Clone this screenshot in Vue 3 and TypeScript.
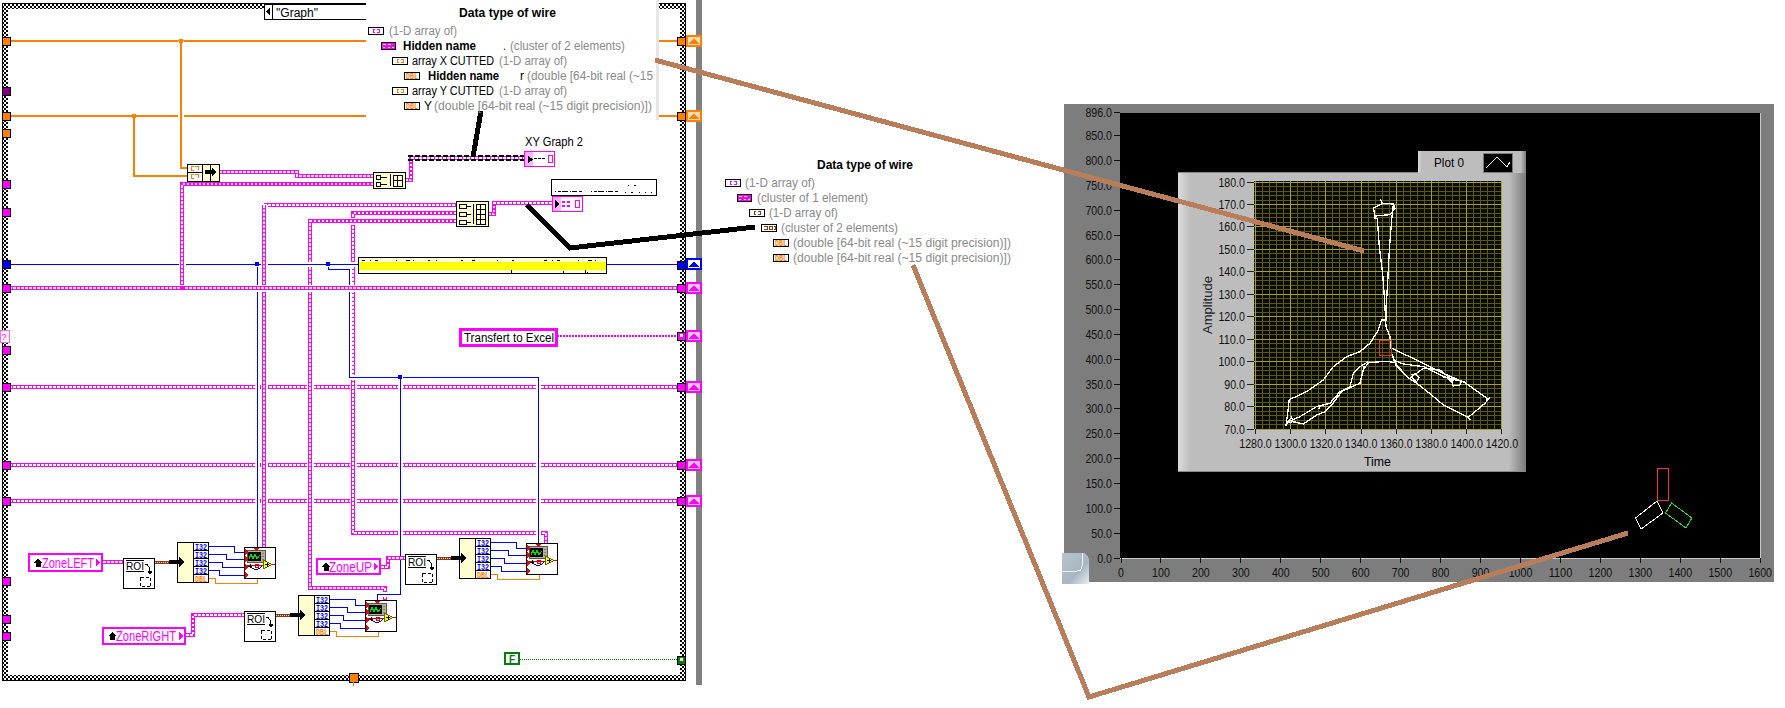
<script setup lang="ts">
type Wire = { d: string; kind: 'pink' | 'blue' | 'orange'; halo?: boolean }
type Label = { x: number; y: number; t: string; w: number; c?: string }

const wires: Wire[] = [
  { d: 'M9 41H366M659 41H678', kind: 'orange' },
  { d: 'M9 116H366M659 116H678', kind: 'orange' },
  { d: 'M181 41V168H188', kind: 'orange', halo: true },
  { d: 'M134 116V176H188', kind: 'orange' },
  { d: 'M9 387H678', kind: 'pink' },
  { d: 'M9 465H678', kind: 'pink' },
  { d: 'M9 501H678', kind: 'pink' },
  { d: 'M264 205H457', kind: 'pink' },
  { d: 'M456 213H353V533H546V545', kind: 'pink', halo: true },
  { d: 'M456 221H310V588H385V600', kind: 'pink', halo: true },
  { d: 'M219 172H297V176H373', kind: 'pink' },
  { d: 'M405 180H411V158H524', kind: 'pink' },
  { d: 'M488 214H494V203H552', kind: 'pink' },
  { d: 'M257 264V547', kind: 'blue', halo: true },
  { d: 'M328 264V269H349V377H538V543', kind: 'blue', halo: true },
  { d: 'M400 377V594H377V600', kind: 'blue', halo: true },
  { d: 'M9 264H358M607 264H678', kind: 'blue', halo: true },
  { d: 'M373 184H182V288', kind: 'pink', halo: true },
  { d: 'M264 205V547', kind: 'pink', halo: true },
  { d: 'M9 288H678', kind: 'pink', halo: true },
  { d: 'M103 562H123', kind: 'pink' },
  { d: 'M186 635H193V615H244', kind: 'pink' },
  { d: 'M381 567H388V558H405', kind: 'pink' },
]

const dots = [
  { x: 181, y: 41, c: '#ff8000' },
  { x: 134, y: 116, c: '#ff8000' },
  { x: 257, y: 264, c: '#0000ff' },
  { x: 328, y: 264, c: '#0000ff' },
  { x: 400, y: 377, c: '#0000ff' },
  { x: 182, y: 288, c: '#ff00ff' },
]

const leftTerms = [
  { y: 41, c: '#ff8000' }, { y: 91, c: '#800080' }, { y: 116, c: '#ff8000' }, { y: 133, c: '#ff8000' },
  { y: 184, c: '#ff00ff' }, { y: 212, c: '#ff00ff' }, { y: 264, c: '#0000ff' }, { y: 288, c: '#ff00ff' },
  { y: 350, c: '#ff00ff' }, { y: 387, c: '#ff00ff' }, { y: 465, c: '#ff00ff' }, { y: 501, c: '#ff00ff' },
  { y: 581, c: '#ff00ff' }, { y: 619, c: '#ff00ff' }, { y: 636, c: '#ff00ff' },
]
const rightTerms = [
  { y: 41, c: '#ff8000' }, { y: 116, c: '#ff8000' }, { y: 265, c: '#0000ff' }, { y: 288, c: '#ff00ff' },
  { y: 336, c: '#ff00ff' }, { y: 387, c: '#ff00ff' }, { y: 465, c: '#ff00ff' }, { y: 501, c: '#ff00ff' },
  { y: 660, c: '#0a7a0a' },
]
const arrows = [
  { y: 41, c: '#ff8000', bg: '#ffd9b0' }, { y: 116, c: '#ff8000', bg: '#ffd9b0' },
  { y: 264, c: '#0000ff', bg: '#ffffff' }, { y: 288, c: '#ff00ff', bg: '#ffc0ff' },
  { y: 336, c: '#ff00ff', bg: '#ffc0ff' }, { y: 387, c: '#ff00ff', bg: '#ffc0ff' },
  { y: 465, c: '#ff00ff', bg: '#ffc0ff' }, { y: 501, c: '#ff00ff', bg: '#ffc0ff' },
]

const groups = [
  { x: 123, y: 558 },
  { x: 244, y: 611 },
  { x: 405, y: 554 },
]
const rowLabels = ['I32', 'I32', 'I32', 'I32', 'DBL']
const blueStairs = [
  'M86 -12H111V-6H121', 'M86 -4H103V1H121', 'M86 4H99V9H121', 'M86 12H96V17H121',
]
const leftPins = [-6, 1, 9, 17]

const constants = [
  { x: 28, y: 553, w: 75, h: 19, t: 'ZoneLEFT', tx: 42, tw: 52 },
  { x: 102, y: 627, w: 84, h: 18, t: 'ZoneRIGHT', tx: 116, tw: 60 },
  { x: 316, y: 558, w: 65, h: 17, t: 'ZoneUP', tx: 329, tw: 43 },
]

const tip: Label[] = [
  { x: 459, y: 17, t: 'Data type of wire', w: 97, c: 'bold' },
  { x: 389, y: 35, t: '(1-D array of)', w: 68, c: 'gray' },
  { x: 403, y: 50, t: 'Hidden name', w: 73, c: 'bold' },
  { x: 503, y: 50, t: '.', w: 3, c: 'ink' },
  { x: 510, y: 50, t: '(cluster of 2 elements)', w: 115, c: 'gray' },
  { x: 412, y: 65, t: 'array X CUTTED', w: 82, c: 'ink' },
  { x: 499, y: 65, t: '(1-D array of)', w: 68, c: 'gray' },
  { x: 428, y: 80, t: 'Hidden name', w: 71, c: 'bold' },
  { x: 520, y: 80, t: 'r', w: 4, c: 'ink' },
  { x: 527, y: 80, t: '(double [64-bit real (~15', w: 126, c: 'gray' },
  { x: 412, y: 95, t: 'array Y CUTTED', w: 82, c: 'ink' },
  { x: 499, y: 95, t: '(1-D array of)', w: 68, c: 'gray' },
  { x: 424, y: 110, t: 'Y', w: 8, c: 'ink' },
  { x: 434, y: 110, t: '(double [64-bit real (~15 digit precision)])', w: 218, c: 'gray' },
  { x: 817, y: 169, t: 'Data type of wire', w: 96, c: 'bold' },
  { x: 745, y: 187, t: '(1-D array of)', w: 70, c: 'gray' },
  { x: 757, y: 202, t: '(cluster of 1 element)', w: 111, c: 'gray' },
  { x: 769, y: 217, t: '(1-D array of)', w: 69, c: 'gray' },
  { x: 781, y: 232, t: '(cluster of 2 elements)', w: 117, c: 'gray' },
  { x: 793, y: 247, t: '(double [64-bit real (~15 digit precision)])', w: 218, c: 'gray' },
  { x: 793, y: 262, t: '(double [64-bit real (~15 digit precision)])', w: 218, c: 'gray' },
  { x: 525, y: 146, t: 'XY Graph 2', w: 58, c: 'ink' },
  { x: 464, y: 342, t: 'Transfert to Excel', w: 90, c: 'ink' },
  { x: 276, y: 17, t: '"Graph"', w: 42, c: 'ink' },
  { x: 1434, y: 167, t: 'Plot 0', w: 30, c: 'ink' },
  { x: 1364, y: 466, t: 'Time', w: 27, c: 'ink' },
]

const icons = [
  { x: 368, y: 27, k: 'arr', c: '#ff00ff' },
  { x: 381, y: 42, k: 'clu', c: '#ff00ff' },
  { x: 392, y: 57, k: 'arr', c: '#ff8000' },
  { x: 404, y: 72, k: 'dbl', c: '#ff8000' },
  { x: 392, y: 87, k: 'arr', c: '#ff8000' },
  { x: 404, y: 102, k: 'dbl', c: '#ff8000' },
  { x: 725, y: 179, k: 'arr', c: '#ff00ff' },
  { x: 737, y: 194, k: 'clu', c: '#ff00ff' },
  { x: 749, y: 209, k: 'arr', c: '#8b3a0f' },
  { x: 761, y: 224, k: 'cb', c: '#8b3a0f' },
  { x: 773, y: 239, k: 'dbl', c: '#ff8000' },
  { x: 773, y: 254, k: 'dbl', c: '#ff8000' },
]

const numW = (t: string) => t.replace('.', '').length * 5.9 + (t.includes('.') ? 3 : 0)

const outerY = [896, 850, 800, 750, 700, 650, 600, 550, 500, 450, 400, 350, 300, 250, 200, 150, 100, 50, 0]
  .map(v => ({ y: 558 - v * 0.4967, t: v.toFixed(1) }))
const outerX = Array.from({ length: 17 }, (_, i) => ({ x: 1121 + i * 39.95, t: String(i * 100) }))

const innerY = Array.from({ length: 12 }, (_, i) => ({ y: 429 - i * 22.45, t: (70 + i * 10).toFixed(1) }))
const innerX = Array.from({ length: 8 }, (_, i) => ({ x: 1255.5 + i * 35.2, t: (1280 + i * 20).toFixed(1) }))
const minorY = Array.from({ length: 56 }, (_, i) => 429 - i * 4.49)
const minorX = Array.from({ length: 36 }, (_, i) => 1255.5 + i * 7.04)

const curves = [
  '660,178 668,190 700,192 705,205 690,224 645,228 640,205 650,200 668,190',
  '643,210 645,235 652,235 658,320 668,400 675,500 678,560 690,590 695,640 710,680 740,710 770,730 815,765 850,795 925,832 932,840',
  '700,195 695,240 688,330 684,410 680,480 678,540 665,540 655,570 630,610 600,635 560,650 520,680 490,720 440,755 410,770 388,778 383,820 378,858',
  '378,850 400,845 430,852 470,825 495,815 515,795 545,755 580,738 600,730 610,690 625,668 680,664 705,668 740,710',
  '385,845 420,830 470,800 510,790 540,755 570,740 580,700 600,680 625,665',
  '695,625 770,660 850,700 915,728 985,778 975,790 925,832',
  '700,660 730,672 790,680 850,710 895,722 915,725',
  '755,705 770,700 790,685 840,690 870,715 880,738 900,735 905,722',
  '985,778 990,772',
  '975,790 983,780 978,775',
  '752,715 765,702 778,712 770,725 755,712',
  '845,710 860,712 875,725 885,715 870,722',
  '604,675 612,680 610,690',
  '470,800 482,798 475,808',
  '378,850 395,832 400,848',
]
</script>

<template>
  <div class="page">
    <svg class="canvas" width="1785" height="708" viewBox="0 0 1785 708">
      <defs>
        <pattern id="hatch" width="4" height="4" patternUnits="userSpaceOnUse">
          <rect width="4" height="4" fill="#fff" />
          <rect width="2" height="2" fill="#000" />
          <rect x="2" y="2" width="2" height="2" fill="#000" />
        </pattern>
        <linearGradient id="panel" x1="0" x2="1" y1="0" y2="0">
          <stop offset="0" stop-color="#dcdcdc" />
          <stop offset="0.035" stop-color="#bdbdbd" />
          <stop offset="0.95" stop-color="#bdbdbd" />
          <stop offset="1" stop-color="#7c7c7c" />
        </linearGradient>
        <linearGradient id="btn" x1="0" x2="1" y1="0" y2="1">
          <stop offset="0" stop-color="#b8c4d0" />
          <stop offset="0.6" stop-color="#a7b5c4" />
          <stop offset="1" stop-color="#e8eef4" />
        </linearGradient>
      </defs>

      <!-- block diagram -->
      <g class="crisp">
        <rect x="696" y="0" width="6" height="685" fill="#808080" />
        <path d="M2 3H686V681H2ZM8 9V675H680V9Z" fill="url(#hatch)" fill-rule="evenodd" />
        <rect x="2.5" y="3.5" width="683" height="677" fill="none" stroke="#000" />

        <template v-for="(w, i) in wires" :key="i">
          <path v-if="w.halo" :d="w.d" :class="'halo-' + w.kind" />
          <path :d="w.d" :class="'w-' + w.kind" />
          <path v-if="w.kind === 'pink'" :d="w.d" class="w-dash" />
        </template>

        <path d="M408 156H524M408 160H524" class="w-black" />
        <path d="M557 336H678" class="w-thin" />
        <path d="M520 659H678" class="w-green" />

        <g v-for="d in dots" :key="d.x + '-' + d.y">
          <rect :x="d.x - 2" :y="d.y - 2" width="4" height="4" :fill="d.c" />
        </g>

        <!-- frame terminals -->
        <rect v-for="t in leftTerms" :key="'l' + t.y" x="2" :y="t.y - 4" width="8" height="8" :fill="t.c" stroke="#000" />
        <rect x="0" y="330" width="9" height="12" fill="#fff8ff" stroke="#ff66ff" />
        <rect v-for="t in rightTerms" :key="'r' + t.y" x="677" :y="t.y - 4" width="8" height="8" :fill="t.c" stroke="#000" />
        <rect x="680" y="334" width="3" height="3" fill="#fff" />
        <rect x="680" y="658" width="3" height="3" fill="#fff" />
        <g v-for="a in arrows" :key="'a' + a.y">
          <rect x="687" :y="a.y - 5" width="14" height="10" :fill="a.bg" :stroke="a.c" stroke-width="2" />
          <path :d="`M689 ${a.y + 3}L694 ${a.y - 3}L699 ${a.y + 3}Z`" :fill="a.c" />
        </g>
        <rect x="349" y="673" width="9" height="9" fill="#ff8000" stroke="#000" />
        <path d="M353 682V686" stroke="#ff8000" />

        <!-- case selector -->
        <rect x="264" y="4" width="120" height="15" fill="#fff" stroke="#000" />
        <path d="M264 4H272V19H264Z" fill="#fff" stroke="#000" />
        <path d="M270 8V15L266 11.5Z" fill="#000" />

        <!-- bundle -->
        <rect x="187" y="164" width="32" height="17" fill="#ffffd0" stroke="#000" />
        <rect x="187" y="164" width="15" height="17" fill="#fff" stroke="#000" />
        <path d="M187 172H202M210 164V181" stroke="#000" fill="none" />
        <path d="M191 168V166H194M198 166H195M191 168V170H194M198 170V166M191 176V174H194M198 174H195M191 176V178H194M198 178V174" stroke="#ff8000" fill="none" />
        <path d="M205 170H212V168L217 172L212 176V174H205Z" fill="#000" />

        <!-- build array small -->
        <rect x="373" y="172" width="32" height="16" fill="#ffffd0" stroke="#000" />
        <rect x="376" y="175" width="4" height="4" fill="#fff" stroke="#000" />
        <rect x="376" y="182" width="4" height="4" fill="#fff" stroke="#000" />
        <path d="M381 177H387M381 184H387M390 174V186M393 175H402V186H393ZM393 180H402M397 175V186" stroke="#000" fill="none" />

        <!-- build array large -->
        <rect x="456" y="201" width="32" height="25" fill="#ffffd0" stroke="#000" />
        <path d="M459 204H466V208H459ZM459 212H466V216H459ZM459 220H466V224H459ZM467 206H471M467 214H471M467 222H471M473 204V224M476 204H485V224H476ZM476 209H485M476 214H485M476 219H485M480 204V224" stroke="#000" fill="none" />

        <!-- indicators -->
        <rect x="524.5" y="151.5" width="30" height="15" fill="#fff" stroke="#ff00ff" />
        <rect x="525" y="152" width="8" height="14" fill="#ffb0ff" />
        <path d="M528 156V163L533 159.5Z" fill="#000" />
        <path d="M534 158H546" stroke="#000" stroke-dasharray="3 1" />
        <rect x="548" y="155" width="4" height="7" fill="none" stroke="#ff00ff" />
        <rect x="552.5" y="196.5" width="30" height="15" fill="#fff" stroke="#ff00ff" />
        <rect x="553" y="197" width="8" height="14" fill="#ffb0ff" />
        <path d="M555 200V208L560 204Z" fill="#000" />
        <path d="M562 202H572M562 206H572" stroke="#ff00ff" stroke-width="2" stroke-dasharray="3 2" />
        <rect x="575" y="200" width="4" height="7" fill="none" stroke="#ff00ff" />
        <rect x="551.5" y="179.5" width="105" height="16" fill="#fff" stroke="#000" />
        <path d="M555 191H620" stroke="#000" stroke-dasharray="1 2 3 1 6 2 1 1 5 2 3 9" />
        <path d="M625 192H652M628 185H640" stroke="#000" stroke-dasharray="1 5 2 6 1 5" />

        <!-- comment -->
        <rect x="358.5" y="257.5" width="248" height="16" fill="#ffffd8" stroke="#000" />
        <rect x="359" y="262" width="247" height="8" fill="#ffff00" />
        <path d="M362 260.5H604" stroke="#000" stroke-dasharray="3 5 1 4 3 18 1 9 4 3 1 14 2 6 1 24 2 9 3 22 1 14 2 30" />
        <path d="M511 270V273M563 271V273M585 270V273M587 272V273" stroke="#000" />

        <!-- transfer constant -->
        <rect x="460" y="329" width="96" height="16" fill="#fff" stroke="#ff00ff" stroke-width="3" />

        <!-- boolean constant -->
        <rect x="505" y="653" width="14" height="11" fill="#fff" stroke="#0a7a0a" stroke-width="2" />

        <!-- path constants -->
        <g v-for="k in constants" :key="k.t">
          <rect :x="k.x + 1" :y="k.y + 1" :width="k.w - 2" :height="k.h - 2" fill="#fff" stroke="#ff00ff" stroke-width="2" />
          <path :d="`M${k.x + 6} ${k.y + k.h / 2}l4 -4l4 4h-1.500v4h-5v-4z`" fill="#000" />
          <path :d="`M${k.x + k.w - 7} ${k.y + k.h / 2 - 4}v8l4 -4z`" fill="#ff00ff" />
        </g>

        <!-- ROI → unbundle → VI -->
        <g v-for="g in groups" :key="g.x" :transform="`translate(${g.x} ${g.y})`">
          <rect x="0.500" y="0.500" width="31" height="30" fill="#fff" stroke="#000" />
          <path d="M3 2H21M3 13H21" stroke="#000" />
          <path d="M22 6Q27 7 27 14" stroke="#000" fill="none" />
          <path d="M24.500 13H29.500L27 17Z" fill="#000" />
          <rect x="17.500" y="19.500" width="10" height="9" fill="none" stroke="#000" stroke-dasharray="3 2" />

          <path d="M32 4H50" class="w-brown" />
          <path d="M32 4H50" class="w-brown-dash" />

          <rect x="54.500" y="-15.500" width="31" height="40" fill="#ffffd0" stroke="#000" />
          <path d="M46 2H56V-1L62 4L56 9V6H46Z" fill="#000" />
          <g v-for="(r, i) in rowLabels" :key="i">
            <rect x="70.500" :y="-15.500 + i * 8" width="15" height="8" fill="#fff" stroke="#000" />
          </g>

          <path v-for="(d, i) in blueStairs" :key="i" :d="d" class="w-sub-blue" />
          <path d="M86 20H92V25H134V21" class="w-sub-orange" />

          <rect x="121.500" y="-10.500" width="31" height="31" fill="#fff" stroke="#000" />
          <rect x="124.500" y="-7.500" width="18" height="12" fill="#b7b191" stroke="#555" />
          <rect x="125" y="-6" width="13" height="9" fill="#000" />
          <path d="M126 1L128 -4L130 1L132 -4L134 1L137 -3" stroke="#00e000" fill="none" />
          <path d="M139 -5H141M139 -2H141M139 1H141" stroke="#777" />
          <path d="M124 7H148" stroke="#d00000" />
          <path d="M127 8Q133 15 139 8" stroke="#0000c0" fill="none" />
          <path d="M125 8H129M127 6V10" stroke="#000" />
          <circle cx="134" cy="8" r="2" fill="none" stroke="#e00000" />
          <path d="M140 2L149 6.500L140 11Z" fill="#ffff00" stroke="#606000" />
          <path d="M142 6.500H146M144 4.500V8.500" stroke="#000" />
          <path d="M149 6.500H152" stroke="#e00000" />
          <path d="M131 -10H136L133.500 -7Z" fill="#f00000" />
          <path v-for="p in leftPins" :key="p" :d="`M122 ${p - 3}L125 ${p}L122 ${p + 3}Z`" fill="#f00000" />
        </g>
      </g>

      <!-- row labels inside the sub-VI nodes -->
      <g v-for="g in groups" :key="'t' + g.x" :transform="`translate(${g.x} ${g.y})`">
        <text class="roi" x="3" y="11.500" textLength="18" lengthAdjust="spacingAndGlyphs">ROI</text>
        <text
          v-for="(r, i) in rowLabels"
          :key="i"
          x="78"
          :y="-8.500 + i * 8"
          class="tiny"
          :class="r === 'DBL' ? 'orange' : 'blue'"
          textLength="12"
          lengthAdjust="spacingAndGlyphs"
          text-anchor="middle"
        >{{ r }}</text>
      </g>

      <text x="512" y="663" class="const-f">F</text>
      <text v-for="k in constants" :key="'c' + k.t" :x="k.tx" :y="k.y + k.h / 2 + 5" class="pink-text" :textLength="k.tw" lengthAdjust="spacingAndGlyphs">{{ k.t }}</text>
      <text x="1.500" y="340" class="question">?</text>

      <!-- front panel -->
      <g class="crisp">
        <rect x="1064" y="104" width="710" height="478" fill="#7d7d7d" />
        <rect x="1120" y="113" width="640" height="445" fill="#000" />
        <path d="M1120 558.500H1760.500V113" stroke="#c8c8c8" fill="none" />
        <path v-for="l in outerY" :key="l.t" :d="`M1114 ${l.y}H1120`" stroke="#111" />
        <path v-for="l in outerX" :key="l.t" :d="`M${l.x} 558V563`" stroke="#111" />

        <rect x="1178" y="172" width="348" height="300" fill="url(#panel)" />
        <path d="M1178 172.500H1418M1178 471.500H1526" stroke="#888" />
        <rect x="1418" y="151" width="108" height="22" fill="url(#panel)" />
        <rect x="1483" y="153" width="29" height="19" fill="#000" stroke="#7c7c7c" />
        <path d="M1486 168L1497 157L1507 167L1510 162" stroke="#fff" fill="none" />

        <rect x="1254" y="181" width="248" height="248" fill="#0a0a00" />
        <path v-for="y in minorY" :key="'my' + y" :d="`M1254 ${y}H1502`" stroke="#5a5a08" />
        <path v-for="x in minorX" :key="'mx' + x" :d="`M${x} 181V429`" stroke="#5a5a08" />
        <path v-for="l in innerY" :key="'ly' + l.t" :d="`M1254 ${l.y}H1502`" stroke="#a8a800" />
        <path v-for="l in innerX" :key="'lx' + l.t" :d="`M${l.x} 181V429`" stroke="#a8a800" />
        <path v-for="l in innerY" :key="'ty' + l.t" :d="`M1247 ${l.y}H1254`" stroke="#222" />
        <path v-for="l in innerX" :key="'tx' + l.t" :d="`M${l.x} 429V434`" stroke="#222" />

        <g transform="translate(1160 140) scale(0.3333)">
          <polyline v-for="(c, i) in curves" :key="i" :points="c" class="trace" />
          <rect x="658" y="601" width="37" height="46" class="red-box" />
        </g>

        <rect x="1657.500" y="468.500" width="11" height="32" fill="none" stroke="#ff3030" />
        <polygon points="1657,501 1663,513 1641,529 1635.500,518" fill="none" stroke="#fff" />
        <polygon points="1671.500,503 1692,518 1686,528 1665.500,513" fill="none" stroke="#20e020" />

        <path d="M1062 553H1081Q1089 553 1089 561V584H1062Z" fill="url(#btn)" />
        <path d="M1062 571H1077Q1082 571 1082 566V553" stroke="#eef2f6" fill="none" />
      </g>

      <text v-for="l in outerY" :key="'oy' + l.t" x="1112" :y="l.y + 4.500" class="num" text-anchor="end" :textLength="numW(l.t)" lengthAdjust="spacingAndGlyphs">{{ l.t }}</text>
      <text v-for="l in outerX" :key="'ox' + l.t" :x="l.x" y="577" class="num" text-anchor="middle" :textLength="numW(l.t)" lengthAdjust="spacingAndGlyphs">{{ l.t }}</text>
      <text v-for="l in innerY" :key="'iy' + l.t" x="1245" :y="l.y + 4.500" class="num" text-anchor="end" :textLength="numW(l.t)" lengthAdjust="spacingAndGlyphs">{{ l.t }}</text>
      <text v-for="l in innerX" :key="'ix' + l.t" :x="l.x" y="448" class="num" text-anchor="middle" :textLength="numW(l.t)" lengthAdjust="spacingAndGlyphs">{{ l.t }}</text>
      <text class="axis-y" transform="translate(1212 305) rotate(-90)" text-anchor="middle">Amplitude</text>

      <!-- wire-type tooltip panel -->
      <g class="crisp">
        <rect x="366" y="0" width="290" height="120" fill="#fff" />
        <rect x="656" y="0" width="3" height="120" fill="#e6e6e6" />
      </g>

      <!-- annotation strokes drawn by hand over the screenshot -->
      <g class="crisp">
        <path d="M655 60L1364 251" class="tan" />
        <path d="M913 265L1089 697L1628 533" class="tan" />
        <path d="M481 111L473 157" class="ann" />
        <path d="M527 205L570 248L755 227" class="ann" />
      </g>

      <g v-for="(ic, i) in icons" :key="i" :transform="`translate(${ic.x} ${ic.y})`">
        <g class="crisp">
          <rect
            x="0.500"
            y="0.500"
            :width="ic.k === 'clu' ? 14 : 15"
            height="7"
            :fill="ic.k === 'clu' ? ic.c : '#fff'"
            stroke="#000"
          />
          <path v-if="ic.k === 'arr'" :d="'M7 2.500H5V5.500H7M9 2.500H11V5.500H9'" :stroke="ic.c" fill="none" />
          <path v-if="ic.k === 'clu'" d="M2 2H5V3H2ZM7 2H10V3H7ZM2 5H4V6H2ZM7 5H9V6H7ZM11 5H13V6H11Z" fill="#fff" />
          <path v-if="ic.k === 'cb'" d="M2.500 2.500H6V5.500H2.500M8 2.500H11V5.500H8ZM12.500 2.500H14V5.500H12.500" :stroke="ic.c" fill="none" />
        </g>
        <text v-if="ic.k === 'dbl'" x="8" y="7" class="tiny orange" text-anchor="middle" textLength="12" lengthAdjust="spacingAndGlyphs">DBL</text>
      </g>
      <text
        v-for="(l, i) in tip"
        :key="i"
        :x="l.x"
        :y="l.y"
        :class="l.c"
        class="lbl"
        :textLength="l.w"
        lengthAdjust="spacingAndGlyphs"
      >{{ l.t }}</text>
    </svg>
  </div>
</template>

<style>
html, body { margin: 0; background: #fff; }
</style>

<style scoped>
.page {
  width: 1785px;
  height: 708px;
  overflow: hidden;
  background: #fff;
}
.canvas { display: block; }
.crisp { shape-rendering: crispEdges; }

.w-pink { fill: none; stroke: #ff00ff; stroke-width: 4; }
.w-dash { fill: none; stroke: #fff; stroke-width: 1.2; stroke-dasharray: 2.5 1.5; }
.w-blue { fill: none; stroke: #0000ff; stroke-width: 1; }
.w-orange { fill: none; stroke: #ff8000; stroke-width: 2; }
.halo-pink { fill: none; stroke: #fff; stroke-width: 7; }
.halo-blue { fill: none; stroke: #fff; stroke-width: 5; }
.halo-orange { fill: none; stroke: #fff; stroke-width: 6; }
.w-black { fill: none; stroke: #000; stroke-width: 1.5; stroke-dasharray: 5 2; }
.w-thin { fill: none; stroke: #ff00ff; stroke-width: 2; stroke-dasharray: 2 1; }
.w-green { fill: none; stroke: #0a7a0a; stroke-width: 1; stroke-dasharray: 1 1; }
.w-brown { fill: none; stroke: #8b3a0f; stroke-width: 3; }
.w-brown-dash { fill: none; stroke: #f0d8c8; stroke-width: 1; stroke-dasharray: 1 1; }
.w-sub-blue { fill: none; stroke: #0000ff; stroke-width: 1; }
.w-sub-orange { fill: none; stroke: #ff8000; stroke-width: 1; }

.trace { fill: none; stroke: #fff; stroke-width: 4; }
.red-box { fill: none; stroke: #e83030; stroke-width: 3; }
.tan { fill: none; stroke: #b97d5a; stroke-width: 5; }
.ann { fill: none; stroke: #000; stroke-width: 5; }

text { font-family: "Liberation Sans", Arial, sans-serif; }
.lbl { font-size: 12.5px; }
.gray { fill: #8a8a8a; }
.ink { fill: #000; }
.bold { fill: #000; font-weight: 700; }
.num { font-size: 13px; fill: #111; }
.axis-y { font-size: 13px; fill: #222; }
.roi { font-family: "Liberation Sans", sans-serif; font-size: 11px; fill: #000; }
.tiny { font-family: "Liberation Mono", monospace; font-size: 9px; font-weight: 700; }
.blue { fill: #0000ff; }
.orange { fill: #ff8000; }
.pink-text { font-size: 14px; fill: #ff00ff; }
.const-f { font-size: 10px; font-weight: 700; fill: #0a7a0a; text-anchor: middle; }
.question { font-size: 9px; fill: #ff00ff; }
</style>
